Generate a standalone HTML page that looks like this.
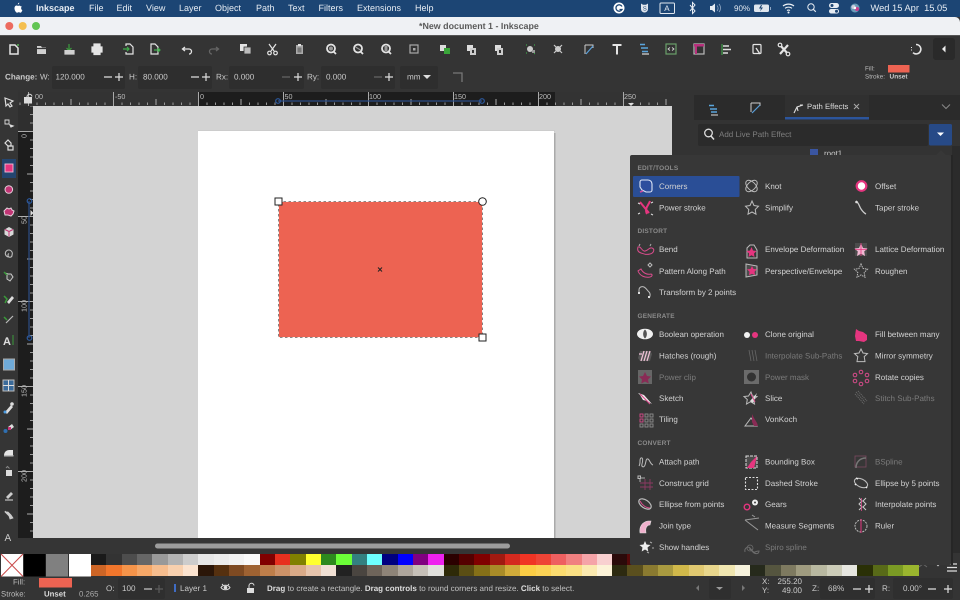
<!DOCTYPE html>
<html><head><meta charset="utf-8"><title>Inkscape</title>
<style>
html,body{margin:0;padding:0;width:960px;height:600px;overflow:hidden;background:#333}
svg{position:absolute;left:0;top:0;display:block;filter:blur(.3px)}
text{font-family:"Liberation Sans",sans-serif;white-space:pre;text-rendering:geometricPrecision}
.m{font-size:9px;fill:#e6ecf3}
.t{font-size:8.1px;fill:#c9c9c9}
.p{font-size:8px;fill:#d2d2d2}
.d{fill:#7b7b7b}
.h{font-size:6.5px;font-weight:bold;fill:#8a8a8a;letter-spacing:.2px}
.r{font-size:7.2px;fill:#bbb}
.k{fill:none;stroke:#bcbcbc;stroke-width:1}
.pk{fill:#e5357f}
.ps{fill:none;stroke:#d94c8c;stroke-width:1}
#pal{position:absolute;left:91px;top:554px;width:860px;filter:blur(.3px)}
#pal div.row{display:flex;height:11.2px}
#pal div.row i{display:block;width:15.33px;flex:none;height:100%}
</style></head><body>
<svg width="960" height="600" viewBox="0 0 960 600">
<defs>
<pattern id="hr" x="198" y="92" width="8.5" height="13" patternUnits="userSpaceOnUse"><rect x="0" y="10.5" width="1" height="2.5" fill="#999"/></pattern>
<pattern id="hM" x="198" y="92" width="85" height="13" patternUnits="userSpaceOnUse"><rect x="0" y="0" width="1" height="13" fill="#aaa"/><rect x="42.5" y="7" width="1" height="6" fill="#aaa"/></pattern>
<pattern id="vr" x="18" y="131" width="15" height="8.5" patternUnits="userSpaceOnUse"><rect x="12" y="0" width="3" height="1" fill="#999"/></pattern>
<pattern id="vM" x="18" y="131" width="15" height="85" patternUnits="userSpaceOnUse"><rect x="0" y="0" width="15" height="1" fill="#aaa"/><rect x="9" y="42.5" width="6" height="1" fill="#aaa"/></pattern>
</defs>
<rect width="960" height="600" fill="#343434"/>
<!-- menu bar -->
<rect width="960" height="17" fill="#1c4574"/>
<path d="M18.5 5.2c.8-.1 1.3-.9 1.3-1.8-.8.1-1.500.9-1.400 1.800zM21.300 7c-1.100-.9-1.600-.8-2.800-.4-1-.4-1.700-.6-2.600.2-1.200 1.400-.7 3.800.6 5.500.6.800 1.200 1 1.900.6.700-.3 1.100-.3 1.800 0 .8.400 1.300 0 1.900-.9.300-.5.500-1 .6-1.300-1.400-.8-1.500-2.800-.4-3.700z" fill="#fff" transform="translate(-1.500 -1) scale(1.050)"/>
<text x="36" y="11" class="m" font-weight="bold">Inkscape</text>
<text x="89" y="11" class="m">File</text><text x="116.500" y="11" class="m">Edit</text><text x="146" y="11" class="m">View</text><text x="179" y="11" class="m">Layer</text><text x="215" y="11" class="m">Object</text><text x="256" y="11" class="m">Path</text><text x="288" y="11" class="m">Text</text><text x="318.500" y="11" class="m">Filters</text><text x="357" y="11" class="m">Extensions</text><text x="415" y="11" class="m">Help</text>
<!-- status icons -->
<circle cx="619" cy="8" r="5.500" fill="#fff"/><path d="M622 6.500a3.200 3.200 0 1 0 0 3h-2.500" fill="none" stroke="#1c4574" stroke-width="1.300"/>
<path d="M641 3.500l2 1.200h3l2-1.200v5.500a3.500 3.500 0 0 1-7 0z" fill="#e0e6ee"/><text x="642.800" y="10.500" font-size="6" fill="#1c4574">S</text>
<rect x="660" y="3" width="14.500" height="10.500" rx="1" fill="none" stroke="#dfe6ee"/><text x="664.300" y="11" font-size="8" fill="#e6ecf3">A</text>
<path d="M690 5l5 6-2.500 2.500v-11l2.500 2.500-5 6" fill="none" stroke="#e6ecf3" stroke-width="1"/>
<path d="M710 6h2l3-2.500v9l-3-2.500h-2z" fill="#e6ecf3"/><path d="M717 5.500a4 4 0 0 1 0 5.500M719 4a6 6 0 0 1 0 8" fill="none" stroke="#8fa6c2" stroke-width=".8"/>
<text x="734" y="11" font-size="8" fill="#dfe6ee">90%</text>
<rect x="754" y="4.500" width="15" height="7.500" rx="1.500" fill="#dfe6ee"/><rect x="770" y="7" width="1" height="3" fill="#8fa6c2"/><path d="M761 5l-2 3.500h2l-1 3 3-4h-2l1-2.500z" fill="#1c4574"/>
<path d="M783 6a9 9 0 0 1 11 0M785 8.300a6 6 0 0 1 7 0M787 10.500a3 3 0 0 1 3 0" fill="none" stroke="#eef2f6" stroke-width="1.200"/><circle cx="788.500" cy="12.500" r="1" fill="#eef2f6"/>
<circle cx="811" cy="7" r="3.200" fill="none" stroke="#e6ecf3" stroke-width="1"/><path d="M813.300 9.300l2.500 2.500" stroke="#e6ecf3" stroke-width="1.100"/>
<rect x="829" y="3" width="10" height="5" rx="2.500" fill="#e6ecf3"/><rect x="829" y="9" width="10" height="4.500" rx="2.200" fill="#e6ecf3"/><circle cx="832" cy="5.500" r="1.500" fill="#1c4574"/><circle cx="836.500" cy="11.200" r="1.500" fill="#1c4574"/>
<circle cx="855" cy="8" r="4.500" fill="#6a9bb8"/><circle cx="853.500" cy="7" r="2" fill="#ccd"/><circle cx="857" cy="9" r="2" fill="#c73c8a"/><circle cx="855" cy="8" r="1.200" fill="#fff"/>
<text x="870.500" y="11" font-size="9.300" fill="#e6ecf3">Wed 15 Apr  15.05</text>
<!-- title bar -->
<path d="M0 17H955a5 5 0 0 1 5 5V35H0z" fill="#eff1f4"/>
<rect y="35" width="960" height="1" fill="#555"/>
<circle cx="9.300" cy="26" r="4" fill="#ec6a5e"/><circle cx="22.700" cy="26" r="4" fill="#f4bf4f"/><circle cx="36" cy="26" r="4" fill="#62c554"/>
<text x="419" y="29" font-size="8.900" font-weight="bold" fill="#5a5a5a">*New document 1 - Inkscape</text>
<!-- toolbar 1 icons -->
<g fill="none" stroke="#e4e4e4" stroke-width="1.200">
<path d="M10 45h5l3 3v6h-8z" fill="#343434" stroke-width="1.500"/><circle cx="18" cy="45" r="1" fill="#58b858" stroke="none"/>
<path d="M37 46h4l1 1.500h4v6.500h-9z" fill="#d0d0d0" stroke="none"/><path d="M37 48.500h9" stroke="#333"/>
<path d="M69 44v6M66.500 48l2.500 2.500 2.500-2.500" stroke="#3d9b3f"/><path d="M65 50v4h9v-4" fill="#d0d0d0" stroke="#d0d0d0"/>
<path d="M92 47h10v5h-10z" fill="#e4e4e4"/><rect x="94" y="44" width="6" height="3" fill="#e4e4e4"/><rect x="94" y="52" width="6" height="2.500" fill="#e4e4e4"/>
<path d="M126 46v-2h4l3 3v7h-7v-2"/><path d="M123 49h6M127 47l2 2-2 2" stroke="#3fae4a"/>
<path d="M151 54v-10h4l3 3v7z"/><path d="M154 50h6M158 48l2 2-2 2" stroke="#3fae4a"/>
<path d="M183 49h6a2.500 2.500 0 0 1 0 5M185 47l-2.500 2 2.500 2" stroke-width="1.300"/>
<path d="M218 49h-6a2.500 2.500 0 0 0 0 5M216 47l2.500 2-2.500 2" stroke="#666" stroke-width="1.300"/>
<rect x="240" y="44" width="7" height="7" fill="#e4e4e4" stroke="none"/><rect x="244" y="47" width="7" height="7" fill="#bbb" stroke="#333" stroke-width=".8"/>
<path d="M269 44l5 7M276 44l-5 7"/><circle cx="269.500" cy="53" r="1.800"/><circle cx="275.500" cy="53" r="1.800"/>
<rect x="296" y="45" width="7" height="9" fill="#aaa" stroke="none"/><rect x="298" y="44" width="3" height="2" fill="#e4e4e4" stroke="none"/><rect x="297.500" y="47.500" width="4" height="5" fill="#777" stroke="none"/>
<circle cx="331" cy="48.500" r="4" stroke-width="1.800"/><path d="M334 52l2 2" stroke-width="1.800"/><circle cx="331" cy="48.500" r="2" fill="#999" stroke="none"/>
<circle cx="358" cy="48.500" r="4" stroke-width="1.800"/><path d="M361 52l2 2" stroke-width="1.800"/><path d="M355.500 47l5 3" stroke="#999"/>
<circle cx="386" cy="48.500" r="4" stroke-width="1.800"/><path d="M389 52l2 2" stroke-width="1.800"/><rect x="384.500" y="46" width="3" height="5" fill="#999" stroke="none"/>
<rect x="410" y="45" width="8" height="8" stroke="#aaa"/><rect x="413" y="48" width="2.500" height="2.500" fill="#aaa" stroke="none"/>
<rect x="440" y="45" width="6" height="6" fill="#ddd" stroke="none"/><rect x="444" y="48" width="6" height="6" fill="#3aa63a" stroke="none"/>
<rect x="467" y="45" width="6" height="6" fill="#ddd" stroke="none"/><rect x="470" y="48" width="6" height="7" fill="#ccc" stroke="none"/><rect x="472" y="50" width="2" height="3" fill="#333" stroke="none"/>
<rect x="495" y="45" width="6" height="6" fill="#ddd" stroke="none"/><rect x="497" y="48" width="6" height="7" fill="#ccc" stroke="none"/><rect x="499" y="50" width="2" height="3" fill="#333" stroke="none"/>
<circle cx="530" cy="49" r="3" fill="#ccc" stroke="none"/><rect x="532" y="50" width="3" height="3" fill="#999" stroke="none"/><path d="M526 45h1M534 45h1M526 53h1M534 53.500h1" stroke="#3fa04a"/>
<circle cx="558" cy="49" r="3" fill="#ccc" stroke="none"/><path d="M554 45l2 2M562 45l-2 2M554 53l2-2M562 53l-2-2" stroke="#ccc"/>
<path d="M585 45h8v3M585 45v9" stroke="#ccc" stroke-width="1"/><path d="M586 54l7-8" stroke="#5a9fd8" stroke-width="1.200"/>
<path d="M612.500 45h9M617 45v9.500" stroke-width="2" stroke="#e4e4e4"/>
<path d="M640 44.500h5M641 48h7M642 51.500h6" stroke="#5aa5dc" stroke-width="1.600"/><path d="M642 54h7" stroke="#ddd" stroke-width="1.200"/>
<rect x="666" y="44" width="10" height="10" stroke="#6aa06a"/><path d="M670 47.500l-2 1.500 2 1.500M672 47.500l2 1.500-2 1.500" stroke="#ddd" stroke-width=".8"/>
<rect x="694" y="44" width="10" height="10" stroke="#bbb"/><rect x="694" y="44" width="10" height="2.500" fill="#b8307c" stroke="none"/><rect x="695" y="46" width="2" height="8" fill="#b8307c" stroke="none"/>
<path d="M722 44v11" stroke="#3fa04a"/><path d="M723 46h6M723 49.500h8M723 53h5" stroke="#ddd" stroke-width="1.500"/>
<rect x="753" y="44.500" width="8" height="9" rx="1"/><path d="M756 48l4 6" stroke-width="1.300"/>
<path d="M780 45l8 9M788 45l-8 9" stroke-width="2.200"/><circle cx="780" cy="45" r="1.800" fill="#333"/><circle cx="788" cy="54" r="1.800" fill="#333"/>
<path d="M916 44.500a4.700 4.700 0 1 1-3 8.200" stroke-width="1.600"/><path d="M911 47.500h1M911 50h1" stroke-width="1"/>
</g>
<rect x="933" y="38" width="22" height="22" rx="3" fill="#2a2a2a"/>
<path d="M945.500 45.500v7l-3.500-3.500z" fill="#eee"/>
<!-- toolbar 2 -->
<text x="5" y="79.500" class="t" font-weight="bold">Change:</text>
<text x="40" y="79.500" class="t">W:</text>
<rect x="52" y="66" width="73" height="23" rx="2" fill="#2e2e2e"/>
<text x="55.500" y="79.500" class="t">120.000</text><path d="M104 77h8M115 77h8M119 73v8" stroke="#ddd" stroke-width="1.200"/>
<text x="129" y="79.500" class="t">H:</text>
<rect x="138" y="66" width="74" height="23" rx="2" fill="#2e2e2e"/>
<text x="143" y="79.500" class="t">80.000</text><path d="M191 77h8M202 77h8M206 73v8" stroke="#ddd" stroke-width="1.200"/>
<text x="216" y="79.500" class="t">Rx:</text>
<rect x="229" y="66" width="75" height="23" rx="2" fill="#2e2e2e"/>
<text x="234" y="79.500" class="t">0.000</text><path d="M282 77h8" stroke="#666" stroke-width="1.200"/><path d="M294 77h8M298 73v8" stroke="#ddd" stroke-width="1.200"/>
<text x="307" y="79.500" class="t">Ry:</text>
<rect x="321" y="66" width="74" height="23" rx="2" fill="#2e2e2e"/>
<text x="326" y="79.500" class="t">0.000</text><path d="M374 77h8" stroke="#666" stroke-width="1.200"/><path d="M385 77h8M389 73v8" stroke="#ddd" stroke-width="1.200"/>
<rect x="400" y="66" width="38" height="23" rx="2" fill="#2e2e2e"/>
<text x="407" y="79.500" class="t">mm</text><path d="M423 75h8l-4 4z" fill="#ddd"/>
<path d="M453 73h9v9" fill="none" stroke="#777" stroke-width="1.300"/>
<text x="865" y="70.500" font-size="6.300" fill="#bbb">Fill:</text><rect x="888" y="65" width="21.500" height="7.500" fill="#ed6352"/>
<text x="865" y="78.500" font-size="6.300" fill="#bbb">Stroke:</text><text x="889.500" y="78.500" font-size="6.500" font-weight="bold" fill="#ccc">Unset</text>
<!-- h ruler -->
<rect x="0" y="90" width="18" height="510" fill="#353535"/>
<rect x="18" y="92" width="654" height="14" fill="#333"/>
<rect x="198" y="92" width="357" height="14" fill="#1d1d1d"/>
<rect x="18" y="92" width="654" height="14" fill="url(#hr)"/>
<rect x="18" y="92" width="654" height="14" fill="url(#hM)"/>
<rect x="24" y="97" width="8" height="6.500" fill="#ddd"/><path d="M27 97a2.500 2.500 0 0 1 5-.5" fill="none" stroke="#ddd" stroke-width="1"/>
<text x="35" y="99" class="r">00</text><text x="115" y="99" class="r">-50</text><text x="200" y="99" class="r">0</text><text x="284.500" y="99" class="r">50</text><text x="369" y="99" class="r">100</text><text x="454" y="99" class="r">150</text><text x="539" y="99" class="r">200</text><text x="624" y="99" class="r">250</text>
<path d="M278 101h204" stroke="#2c4d86" stroke-width="1.200"/><circle cx="278" cy="101" r="2.300" fill="none" stroke="#2c5aa0" stroke-width="1.200"/><circle cx="482" cy="101" r="2.300" fill="none" stroke="#2c5aa0" stroke-width="1.200"/>
<path d="M628 103h6l-3 3z" fill="#ddd"/>
<rect x="674" y="95" width="9" height="6.500" rx="1" fill="none" stroke="#ccc" stroke-width="1"/><path d="M676 103h5" stroke="#ccc"/>
<!-- v ruler -->
<rect x="18" y="106" width="15" height="447" fill="#2f2f2f"/>
<rect x="18" y="131" width="15" height="407" fill="#1d1d1d"/>
<rect x="18" y="106" width="15" height="432" fill="url(#vr)"/>
<rect x="18" y="106" width="15" height="432" fill="url(#vM)"/>
<path d="M29 201v137" stroke="#2c4d86" stroke-width="1.200"/><circle cx="29.500" cy="201" r="2.300" fill="none" stroke="#2c5aa0" stroke-width="1.200"/><circle cx="29.500" cy="338" r="2.300" fill="none" stroke="#2c5aa0" stroke-width="1.200"/>
<path d="M30.500 210v6l3-3z" fill="#ddd"/>
<text transform="translate(26.500 138) rotate(-90)" class="r">0</text><text transform="translate(26.500 224) rotate(-90)" class="r">50</text><text transform="translate(26.500 312) rotate(-90)" class="r">100</text><text transform="translate(26.500 397) rotate(-90)" class="r">150</text><text transform="translate(26.500 482) rotate(-90)" class="r">200</text>
<!-- canvas -->
<rect x="33" y="106" width="639" height="432" fill="#d3d3d3"/>
<rect x="554" y="133" width="1.500" height="405" fill="#aaa"/><rect x="198" y="130.500" width="357" height="1" fill="#c4c4c4"/>
<rect x="198" y="131" width="356" height="407" fill="#fff"/>
<rect x="278.500" y="201.500" width="204" height="136" fill="#ed6352"/>
<rect x="278.500" y="201.500" width="204" height="136" fill="none" stroke="#fff" stroke-width=".8"/>
<rect x="278.500" y="201.500" width="204" height="136" fill="none" stroke="#666" stroke-width=".8" stroke-dasharray="2.500 2.500"/>
<rect x="275" y="198" width="7" height="7" fill="#fff" stroke="#222" stroke-width="1"/>
<circle cx="482.500" cy="201.500" r="3.800" fill="#fff" stroke="#222" stroke-width="1"/>
<rect x="479" y="334" width="7" height="7" fill="#fff" stroke="#222" stroke-width="1"/>
<path d="M378 267.500l4 4M382 267.500l-4 4" stroke="#222" stroke-width="1"/>
<!-- bottom area -->
<rect x="18" y="538" width="654" height="16" fill="#353535"/>
<rect x="155" y="543.500" width="355" height="5" rx="2.500" fill="#9c9c9c"/>
<!-- right panel -->
<rect x="672" y="90" width="288" height="463" fill="#333"/>
<rect x="694" y="95" width="266" height="25" fill="#2b2b2b"/>
<rect x="785" y="95" width="84" height="22" fill="#303030"/>
<rect x="785" y="117" width="84" height="2.500" fill="#2c559c"/>
<path d="M709 105.500h5M710 109h7M711 112h6" stroke="#5aa5dc" stroke-width="1.500"/><path d="M711 115h7" stroke="#ddd" stroke-width="1"/>
<path d="M751 103h9v3M751 103v9" fill="none" stroke="#ccc" stroke-width="1"/><path d="M752 113l8-8" stroke="#5a9fd8" stroke-width="1.200"/>
<path d="M794 113l3-6 6-2M797 107l1 4M800 105h3" fill="none" stroke="#ddd" stroke-width="1.100"/>
<text x="807" y="109" font-size="7.700" fill="#ddd">Path Effects</text>
<path d="M854 104l5 5M859 104l-5 5" stroke="#aaa" stroke-width="1"/>
<path d="M942 104.500l4 4 4-4" fill="none" stroke="#888" stroke-width="1"/>
<rect x="698" y="124" width="230" height="22" rx="2" fill="#2b2b2b"/>
<circle cx="708.500" cy="133" r="3.800" fill="none" stroke="#ddd" stroke-width="1.300"/><path d="M711 136l3 3.500" stroke="#ddd" stroke-width="1.500"/>
<text x="719" y="137" font-size="8" fill="#7e7e7e">Add Live Path Effect</text>
<rect x="929" y="124" width="23" height="21.500" rx="1.500" fill="#274a87"/><path d="M937 132.500h7l-3.500 3.500z" fill="#fff"/>
<rect x="810" y="149" width="8" height="8" fill="#3a55a0"/><text x="824" y="156" font-size="8" fill="#ccc">root1</text>
<rect x="952" y="146" width="8" height="407" fill="#2b2b2b"/>
<!-- status bar text -->
<rect x="0" y="577" width="960" height="23" fill="#343434"/>
<text x="13" y="584.500" font-size="7.800" fill="#bbb">Fill:</text><rect x="39" y="578" width="33" height="9.500" fill="#ed6352"/>
<text x="1" y="596.500" font-size="7.800" fill="#bbb">Stroke:</text><text x="44" y="596.500" font-size="7.800" font-weight="bold" fill="#ddd">Unset</text><text x="79" y="596.500" font-size="7.800" fill="#aaa">0.265</text>
<text x="106" y="591" class="t">O:</text><rect x="118" y="578" width="47" height="21" rx="2" fill="#2f2f2f"/><text x="122" y="591" class="t">100</text><path d="M144 589h8" stroke="#ccc" stroke-width="1.200"/><path d="M155 589h8M159 585v8" stroke="#5c5c5c" stroke-width="1.200"/>
<rect x="174" y="584" width="2" height="8" fill="#3f6cc4"/><text x="180" y="591" class="t">Layer 1</text>
<path d="M221 587.500a5 4 0 0 1 9 0a5 4 0 0 1-9 0z" fill="none" stroke="#ddd" stroke-width="1"/><circle cx="225.500" cy="587.500" r="1.800" fill="#ddd"/><path d="M222 584l1 1M229 584l-1 1" stroke="#ddd"/>
<rect x="247" y="588" width="7" height="5" fill="#ddd"/><path d="M249 588v-2a2.500 2.500 0 0 1 5-.5" fill="none" stroke="#ddd" stroke-width="1"/>
<text x="267" y="591" font-size="8" fill="#c0c0c0"><tspan font-weight="bold" fill="#ddd">Drag</tspan> to create a rectangle. <tspan font-weight="bold" fill="#ddd">Drag controls</tspan> to round corners and resize. <tspan font-weight="bold" fill="#ddd">Click</tspan> to select.</text>
<path d="M699 585v6l-3-3z" fill="#777"/><rect x="709" y="578" width="22" height="21" rx="2" fill="#2f2f2f"/><path d="M716 587h7l-3.500 3z" fill="#999"/><path d="M742 585v6l3-3z" fill="#777"/>
<text x="762" y="584" font-size="8" fill="#ccc">X:</text><text x="802" y="584" font-size="8" fill="#ccc" text-anchor="end">255.20</text>
<text x="762" y="593" font-size="8" fill="#ccc">Y:</text><text x="802" y="593" font-size="8" fill="#ccc" text-anchor="end">49.00</text>
<text x="812" y="591" class="t">Z:</text><rect x="820" y="578" width="55" height="21" rx="2" fill="#2f2f2f"/><text x="828" y="591" class="t">68%</text><path d="M853 589h8M865 589h8M869 585v8" stroke="#ddd" stroke-width="1.200"/>
<text x="882" y="591" class="t">R:</text><rect x="893" y="578" width="60" height="21" rx="2" fill="#2f2f2f"/><text x="903" y="591" class="t">0.00°</text><path d="M928 589h8M944 589h8M948 585v8" stroke="#ddd" stroke-width="1.200"/>
<!-- palette none-swatch etc -->
<rect x="1" y="554" width="22" height="22.500" fill="#fff"/><path d="M1 554l22 22.500M23 554l-22 22.500" stroke="#c94a4a" stroke-width="1"/>
<rect x="24" y="554" width="21.500" height="22.500" fill="#000"/><rect x="46" y="554" width="22" height="22.500" fill="#808080"/><rect x="69" y="554" width="22" height="22.500" fill="#fff"/>
<path d="M919 567l4-3 4 3" fill="none" stroke="#666" stroke-width="1"/><path d="M935 563h6l-3 3.500z" fill="#ccc"/>
<path d="M947 564h10M947 567.500h10M947 571h10" stroke="#ddd" stroke-width="1.300"/>
<!-- left toolbar -->
<g fill="none" stroke="#dcdcdc" stroke-width="1.200">
<path d="M5 98l8 3-3 2 2 3-2 1-2-3-2 2z"/>
<path d="M5 120h4v4h-4z" stroke-width=".9"/><path d="M10 125l3 1-2 1z" fill="#ddd"/>
<path d="M5 143l3-3 3 3v3h-3z"/><rect x="8" y="146" width="5" height="4"/>
</g>
<rect x="2" y="159" width="14" height="19" fill="#24456f"/><rect x="5" y="164" width="8" height="8" fill="#e5357f" stroke="#f3c0d8" stroke-width=".9"/>
<circle cx="8.800" cy="189.500" r="3.800" fill="#c23575" stroke="#e8d0dc" stroke-width="1"/>
<path d="M4 211l3-3 2 1 2-1 1 2 2 1-1 3-2 2-3-1-3 0z" fill="#c23575" stroke="#e5d2dc" stroke-width="1"/>
<path d="M9 227l4.500 2.500v5L9 237l-4.500-2.500v-5z" fill="#d9d9d9"/><path d="M9 231.500l4-2M9 231.500l-4-2M9 231.500v5" stroke="#c23575" stroke-width="1"/>
<path d="M9 257a3.500 3.500 0 1 1 3-2 2 2 0 1 1-3-1.500" fill="none" stroke="#bbb" stroke-width="1.100"/>
<path d="M5 273l2 2v4l3 2 3-4-2-3h-3z" fill="#444" stroke="#ccc"/><path d="M4 272l3 3" stroke="#3a9a3a" stroke-width="1.500"/>
<path d="M7 302l5-6 2 2-5 6z" fill="#ddd"/><path d="M4 296l3 3-2 4" stroke="#3a9a3a" stroke-width="1.500" fill="none"/>
<path d="M6 323l7-7" stroke="#bbb" stroke-width="1.200"/><path d="M4 317l3 3" stroke="#3a9a3a" stroke-width="1.500"/>
<text x="3" y="345" font-size="11" font-weight="bold" fill="#ddd">A</text><path d="M13 335v10" stroke="#3a9a3a"/>
<rect x="3.500" y="359" width="11" height="11" fill="#6faad8" stroke="#aaa"/>
<rect x="3" y="380" width="11" height="11" fill="#3a6a9a" stroke="#bbb"/><path d="M8.500 380v5.500h-5.500M8.500 391v-5.500h5.500" stroke="#ddd" fill="none"/>
<path d="M5 412l6-7 2 2-6 7z" fill="#ddd"/><circle cx="5" cy="412" r="1.500" fill="#4a9ae0"/><circle cx="12" cy="404" r="1.800" fill="#ddd"/>
<path d="M8 427l4-3 2 3-4 3z" fill="#ddd"/><circle cx="5.500" cy="431" r="2" fill="#2f6fb0"/><rect x="8" y="427" width="3" height="3" fill="#c23575"/>
<path d="M4 455a5 5 0 0 1 5-5h4v5z" fill="#e4e4e4"/><rect x="4" y="455" width="9.500" height="1.500" fill="#bbb"/>
<rect x="6" y="470" width="6" height="6" fill="#ddd"/><path d="M6 468l1.500-1.500 2 2" stroke="#888" fill="none"/>
<path d="M6 497l5-5 2 2-5 5z" fill="#ccc"/><path d="M5 500h8" stroke="#ddd"/>
<path d="M5 512l4 4 1 3 3-1-2-3-3-3zM6 511l-1 1" fill="#ccc" stroke="#ccc" stroke-width=".8"/>
<text x="4.500" y="541" font-size="10" fill="#ccc">A</text>
</svg>

<div id="pal">
<div class="row"><i style="background:#1a1a1a"></i><i style="background:#333"></i><i style="background:#4d4d4d"></i><i style="background:#666"></i><i style="background:#999"></i><i style="background:#b3b3b3"></i><i style="background:#ccc"></i><i style="background:#e6e6e6"></i><i style="background:#ececec"></i><i style="background:#f2f2f2"></i><i style="background:#f9f9f9"></i><i style="background:#800000"></i><i style="background:#e8301f"></i><i style="background:#808000"></i><i style="background:#ffff2e"></i><i style="background:#2d8a1e"></i><i style="background:#6cff38"></i><i style="background:#338080"></i><i style="background:#6effff"></i><i style="background:#000080"></i><i style="background:#0000ff"></i><i style="background:#800080"></i><i style="background:#ee22ee"></i><i style="background:#2b0000"></i><i style="background:#550000"></i><i style="background:#800000"></i><i style="background:#a01a10"></i><i style="background:#d42a1f"></i><i style="background:#f03424"></i><i style="background:#ee4436"></i><i style="background:#ee6060"></i><i style="background:#f08080"></i><i style="background:#f5a4a8"></i><i style="background:#f8d0d0"></i><i style="background:#2b0a0a"></i><i style="background:#550a0a"></i></div>
<div class="row" style="height:11.300px"><i style="background:#cd6526"></i><i style="background:#f1762c"></i><i style="background:#f5944a"></i><i style="background:#f6a868"></i><i style="background:#f6bd8e"></i><i style="background:#f8d0ae"></i><i style="background:#fbe3cf"></i><i style="background:#2b1608"></i><i style="background:#55300f"></i><i style="background:#7e4a22"></i><i style="background:#9e6232"></i><i style="background:#be7e4a"></i><i style="background:#cc9268"></i><i style="background:#d9aa88"></i><i style="background:#e6c4ac"></i><i style="background:#f0e0d4"></i><i style="background:#222"></i><i style="background:#4a4540"></i><i style="background:#6e645a"></i><i style="background:#8e8478"></i><i style="background:#aea69c"></i><i style="background:#c6c0b8"></i><i style="background:#e0e0dc"></i><i style="background:#2e2a08"></i><i style="background:#5a4e14"></i><i style="background:#857018"></i><i style="background:#a98c28"></i><i style="background:#d0ab3a"></i><i style="background:#fbcd45"></i><i style="background:#fbd255"></i><i style="background:#fbdc70"></i><i style="background:#fae084"></i><i style="background:#fbeab0"></i><i style="background:#fcf3d8"></i><i style="background:#2d2a10"></i><i style="background:#5a4f1e"></i><i style="background:#8a7a30"></i><i style="background:#a99a40"></i><i style="background:#d0b84a"></i><i style="background:#e0c870"></i><i style="background:#e8d68c"></i><i style="background:#f0e6b0"></i><i style="background:#f6f2dc"></i><i style="background:#262a1c"></i><i style="background:#55553f"></i><i style="background:#7e7a60"></i><i style="background:#a09c80"></i><i style="background:#b8b8a0"></i><i style="background:#ccccb8"></i><i style="background:#e6e6e0"></i><i style="background:#2a3006"></i><i style="background:#586a18"></i><i style="background:#7a9a24"></i><i style="background:#9ab52e"></i></div>
</div>

<svg width="960" height="600" viewBox="0 0 960 600">
<path d="M936 155l5-5 5 5z" fill="#373737"/>
<rect x="630" y="155" width="321" height="410" rx="2" fill="#373737"/>
<rect x="951" y="155" width="2" height="410" fill="#262626"/>
<rect x="633" y="176" width="106.500" height="21" rx="1" fill="#2a4e96"/>
<text x="637.500" y="170" class="h">EDIT/TOOLS</text><text x="637.500" y="233" class="h">DISTORT</text><text x="637.500" y="318" class="h">GENERATE</text><text x="637.500" y="445" class="h">CONVERT</text>

<text class="p" x="659" y="189">Corners</text><text class="p" x="765" y="189">Knot</text><text class="p" x="875" y="189">Offset</text>
<text class="p" x="659" y="210.500">Power stroke</text><text class="p" x="765" y="210.500">Simplify</text><text class="p" x="875" y="210.500">Taper stroke</text>
<text class="p" x="659" y="252">Bend</text><text class="p" x="765" y="252">Envelope Deformation</text><text class="p" x="875" y="252">Lattice Deformation</text>
<text class="p" x="659" y="274">Pattern Along Path</text><text class="p" x="765" y="274">Perspective/Envelope</text><text class="p" x="875" y="274">Roughen</text>
<text class="p" x="659" y="295">Transform by 2 points</text>
<text class="p" x="659" y="337">Boolean operation</text><text class="p" x="765" y="337">Clone original</text><text class="p" x="875" y="337">Fill between many</text>
<text class="p" x="659" y="358.500">Hatches (rough)</text><text class="p d" x="765" y="358.500">Interpolate Sub-Paths</text><text class="p" x="875" y="358.500">Mirror symmetry</text>
<text class="p d" x="659" y="380">Power clip</text><text class="p d" x="765" y="380">Power mask</text><text class="p" x="875" y="380">Rotate copies</text>
<text class="p" x="659" y="401">Sketch</text><text class="p" x="765" y="401">Slice</text><text class="p d" x="875" y="401">Stitch Sub-Paths</text>
<text class="p" x="659" y="422">Tiling</text><text class="p" x="765" y="422">VonKoch</text>
<text class="p" x="659" y="464.500">Attach path</text><text class="p" x="765" y="464.500">Bounding Box</text><text class="p d" x="875" y="464.500">BSpline</text>
<text class="p" x="659" y="486">Construct grid</text><text class="p" x="765" y="486">Dashed Stroke</text><text class="p" x="875" y="486">Ellipse by 5 points</text>
<text class="p" x="659" y="507">Ellipse from points</text><text class="p" x="765" y="507">Gears</text><text class="p" x="875" y="507">Interpolate points</text>
<text class="p" x="659" y="528.500">Join type</text><text class="p" x="765" y="528.500">Measure Segments</text><text class="p" x="875" y="528.500">Ruler</text>
<text class="p" x="659" y="550">Show handles</text><text class="p d" x="765" y="550">Spiro spline</text>

<!-- effect icons -->
<path d="M642 180h6a4 4 0 0 1 4 4v6a2 2 0 0 1-2 2h-4l-4-2-2-3v-5a2 2 0 0 1 2-2z" fill="#2d4e9e" stroke="#dfe6f6" stroke-width="1.100"/><path d="M640 192l3-1" stroke="#cf4aa0" stroke-width="1.500"/>
<ellipse cx="751.500" cy="186" rx="7" ry="4" class="k" transform="rotate(45 751.500 186)" stroke-width="1.200"/><ellipse cx="751.500" cy="186" rx="7" ry="4" class="k" transform="rotate(-45 751.500 186)" stroke-width="1.200"/>
<circle cx="861.500" cy="186" r="4.800" fill="#fff" stroke="#e5357f" stroke-width="2.200"/>
<path d="M640 202l9 11M650 201c-1 4-6 7-3 13" fill="none" stroke="#e5357f" stroke-width="2"/><path d="M638 203l2 1M651 214l2 1M638 214l2-1M651 203l2-1" stroke="#ddd"/>
<path d="M752 201l2 4.500 4.500.7-3.300 3.300.8 4.700-4-2.200-4 2.200.8-4.700-3.300-3.300 4.500-.7z" class="k"/>
<path d="M856 201c3 2 3 5 5 8s3 4 5 5" fill="none" stroke="#ccc" stroke-width="1.300"/><circle cx="856.500" cy="202" r="1.300" fill="#ddd"/>
<path d="M638 247c3-1 3 3 6 4s5-4 8-3 2 5-2 6-6 0-9-1-4-3-3-6z" class="ps"/><path d="M640 244l-1 2M651 244l-1 2" stroke="#aaa"/>
<path d="M747 258v-10l3-3h4l3 5v8z" class="k"/><path d="M752 245l1.500 3.500 3.500.5-2.500 2.500.5 3.500-3-1.700-3 1.700.5-3.500-2.500-2.500 3.500-.5z" class="pk" transform="translate(-.5 2)"/>
<rect x="855" y="243" width="12" height="13" fill="#4c4c4c"/><path d="M861 243.500l2 4.500 4.500.5-3.300 3 .8 4.500-4-2.300-4 2.300.8-4.500-3.300-3 4.500-.5z" fill="#f1b7d2"/><path d="M855 249.500h12M861 243v13" stroke="#e5357f" stroke-width=".8"/>
<path d="M638 271c2 5 7 7 12 6 2-.5 3-2 1-3-4 1-8-1-10-5z" class="ps"/><path d="M648 265l2-2 2 2-2 2z" class="k"/>
<path d="M746 264l11 2v9l-11 2z" fill="#4c4c4c" stroke="#bbb" stroke-width="1"/><path d="M752 266l1.500 3 3.500.3-2.500 2.500.5 3.500-3-1.600-3 1.600.5-3.500-2.500-2.500 3.500-.3z" class="pk"/>
<path d="M861 264l2 4.500 4.500.7-3.300 3.300.8 4.700-4-2.200-4 2.200.8-4.700-3.300-3.300 4.500-.7z" stroke="#bbb" stroke-dasharray="1.500 .8" fill="none"/>
<path d="M639 293v-3c0-3 3-4 5-3s3 3 5 5 1 5 0 6" class="k"/><rect x="638" y="292" width="2" height="2" fill="#ddd"/><rect x="648" y="296" width="2" height="2" fill="#ddd"/>
<!-- generate -->
<ellipse cx="645" cy="334" rx="8" ry="5.300" fill="#f1f1f1"/><path d="M645 329.500c-2.500 2-2.500 7 0 9 2.500-2 2.500-7 0-9z" fill="#555"/>
<circle cx="747" cy="335" r="3" fill="#f1f1f1"/><circle cx="755" cy="335" r="3" fill="#e5357f"/>
<path d="M856 329l3 2 4 1 4 3v5l-3 2-5-1-3 0-1-5z" class="pk"/>
<path d="M640 351l10 0 2 3-2 7-10 0-2-3z" fill="#555"/><path d="M641 361l3-10M644 361l3-10M647 361l3-10M639 354l3 0" stroke="#efc0d6" stroke-width="1.300"/>
<path d="M749 350l2 11M752 350l2 11M755 350l2 11" stroke="#666" stroke-width=".8"/>
<path d="M861 349l2 4 4.500.6-3.300 3 .8 5h-8l.8-5-3.300-3 4.500-.6z" class="k" stroke-width="1.200"/>
<rect x="638" y="370" width="14" height="14" fill="#666"/><path d="M645 372l2 4 4 .5-3 3 .7 4-3.700-2-3.700 2 .7-4-3-3 4-.5z" fill="#892b55"/>
<rect x="744" y="370" width="15" height="14" fill="#6b6b6b"/><circle cx="751.500" cy="377" r="4.500" fill="#333"/>
<g class="ps"><circle cx="861" cy="372" r="1.800"/><circle cx="855" cy="375" r="1.800"/><circle cx="867" cy="375" r="1.800"/><circle cx="855" cy="381" r="1.800"/><circle cx="867" cy="381" r="1.800"/><circle cx="861" cy="384" r="1.800"/></g>
<path d="M638 393l6 2 8 9-5-3-4-1-3-5z" fill="#eee"/><path d="M640 394l10 10" stroke="#d94c8c" stroke-width="1.200"/>
<path d="M751 392l1.500 4 4.500.5-3.300 3 .8 4.500-4-2.300-4 2.300.8-4.500-3.300-3 4.500-.5z" class="k"/><path d="M757 393l-7 8 3 2z" fill="#ddd"/><path d="M751 394l4 8" stroke="#d94c8c"/>
<path d="M856 392l9 10M858 391l9 10M855 394l9 10" stroke="#666" stroke-dasharray="1.300 .8"/>
<g fill="none" stroke="#8e8e8e" stroke-width=".9"><rect x="640" y="414" width="3" height="3" stroke="#d94c8c"/><rect x="645" y="414" width="3" height="3"/><rect x="650" y="414" width="3" height="3"/><rect x="640" y="419" width="3" height="3" stroke="#d94c8c"/><rect x="645" y="419" width="3" height="3"/><rect x="650" y="419" width="3" height="3"/><rect x="640" y="424" width="3" height="3"/><rect x="645" y="424" width="3" height="3"/><rect x="650" y="424" width="3" height="3"/></g>
<path d="M745 426l6-8 6 8z" class="k"/><path d="M752 414l2 4 3 5 1 3-4 0-2-4z" fill="#892b55"/>
<!-- convert -->
<path d="M639 466c2-3 0-7 2-8s2 3 1 6 2 4 3 1 1-7 3-6 2 5 5 6" class="k" stroke-width="1.200"/>
<rect x="746" y="456" width="11" height="12" fill="#4c4c4c" stroke="#ddd" stroke-width="1" stroke-dasharray="3 1"/><path d="M747 468l4-6 6-6-3 12z" class="pk"/>
<rect x="855" y="456" width="11" height="11" fill="none" stroke="#7a4a60" stroke-width=".8"/><path d="M856 468c0-6 4-10 10-10" fill="none" stroke="#777" stroke-width="1.500"/>
<path d="M640 483h13M640 487h13M645 479v11M650 479v11" stroke="#8c3a63" stroke-width=".9"/><rect x="638" y="476" width="2.500" height="2.500" fill="none" stroke="#bbb"/><path d="M640 478h5M640 479v3" stroke="#aaa"/>
<rect x="745.500" y="477.500" width="12" height="12" fill="none" stroke="#ddd" stroke-dasharray="2 1.500" stroke-width="1.100"/>
<ellipse cx="861" cy="483" rx="7" ry="4" fill="none" stroke="#bbb" transform="rotate(25 861 483)" stroke-width="1.100"/><path d="M856 478l2 1M866 487l1 1M855 484l1 1" stroke="#eee" stroke-width="1.500"/>
<ellipse cx="645" cy="504" rx="7" ry="4" fill="none" stroke="#bbb" transform="rotate(35 645 504)" stroke-width="1.200"/><path d="M640 501c2 4 6 7 10 7" class="ps"/>
<circle cx="747" cy="507" r="2.800" fill="none" stroke="#e5357f" stroke-width="1.400"/><circle cx="755" cy="502.500" r="3" fill="#eee"/><circle cx="755" cy="502.500" r="1" fill="#444"/>
<path d="M859 498l3 3-3 3 3 3-3 3M866 498l-3 3 3 3-3 3 3 3" fill="none" stroke="#ccc"/><path d="M861.500 498v13" stroke="#d94c8c" stroke-width=".8"/>
<path d="M640 533c-1-6 2-11 8-12l3 0-1 4c-3 0-5 3-4 8z" fill="#f0b0cc" stroke="#ddd" stroke-width=".6"/>
<path d="M745 520l14-2M745 520l13 10M752 515l3 2" fill="none" stroke="#999"/>
<circle cx="861" cy="526" r="6" fill="none" stroke="#bbb" stroke-dasharray="2 1"/><path d="M861 519v14" stroke="#e5357f"/>
<path d="M645 541l1.500 3.500 4 .5-3 2.500.8 4-3.300-2-3.300 2 .8-4-3-2.500 4-.5z" fill="#eee"/><path d="M650 542l2 1M652 548l2 0M647 552l2 1" stroke="#aaa"/>
<path d="M745 552c-1-4 3-6 5-4s3 5 5 4 3-1 4-1c0 3-3 3-5 2s-3-4-5-4" fill="none" stroke="#6c6c6c" stroke-width="1"/><circle cx="750" cy="548" r="3" fill="none" stroke="#6c6c6c" stroke-width=".8"/>
</svg>
</body></html>
